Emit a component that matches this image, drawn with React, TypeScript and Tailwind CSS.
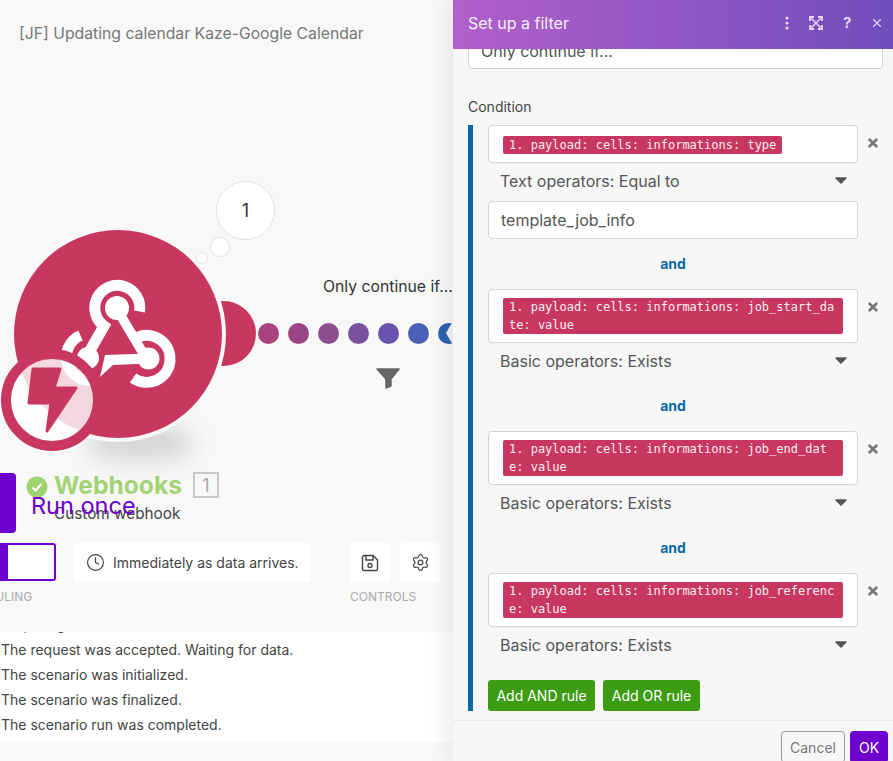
import { Clock, Settings, X } from "lucide-react";

const Token = ({ text }: { text: string }) => (
  <span className="inline-block max-w-full rounded-[2px] bg-[#c8375f] px-[6px] font-['DejaVu_Sans_Mono',monospace] text-[12px] leading-[18px] break-all text-[#fbeef2]">
    {text}
  </span>
);

const Caret = () => (
  <svg width="12" height="7" viewBox="0 0 12 7" className="mr-[11px] -mt-[1px]">
    <path d="M1 1h10L6 6z" fill="#555" stroke="#555" strokeWidth="1.5" strokeLinejoin="round" />
  </svg>
);

const Rule = ({ token, operator, value }: { token: string; operator: string; value?: string }) => (
  <div className="flex flex-col">
    <div className="flex items-start">
      <div className="flex min-h-[38px] w-[370px] shrink-0 items-end rounded-[4px] border border-[#d5d5d5] bg-white px-[14px] py-[8px] leading-[0] shadow-[0_1px_1px_rgba(0,0,0,0.03)]">
        <div>
          <Token text={token} />
        </div>
      </div>
      <svg width="12" height="12" viewBox="0 0 12 12" className="mt-[12px] ml-[10px]" stroke="#777" strokeWidth="3.2">
        <path d="M1 1l10 10M11 1L1 11" />
      </svg>
    </div>
    <div className="mb-[2px] flex h-[36px] w-[370px] items-center justify-between pl-[12px] text-[16px] text-[#555]">
      {operator}
      <Caret />
    </div>
    {value && (
      <div className="flex h-[38px] w-[370px] items-center rounded-[4px] border border-[#d5d5d5] bg-white px-[12px] text-[16px] text-[#555]">
        {value}
      </div>
    )}
  </div>
);

const And = () => (
  <div className="flex h-[50px] w-[370px] items-center justify-center pb-[2px] text-[14px] font-bold text-[#0b69a8]">and</div>
);

const WebhookGlyph = () => (
  <svg className="absolute top-0 left-0" width="230" height="460" viewBox="0 0 230 460" fill="none" stroke="#fff" strokeWidth="11">
    {/* top loop, runs down into the left leg */}
    <path d="M139.5 311.5A22.5 22.5 0 1 0 104 326L88 354" />
    <circle cx="117" cy="308" r="12" fill="#fff" stroke="none" />
    {/* leg to the right dot */}
    <path d="M121 316L143 353" strokeWidth="9.5" />
    {/* right loop */}
    <path d="M138 337A23.5 23.5 0 1 1 133 378" />
    <circle cx="148.5" cy="358.5" r="11" fill="#fff" stroke="none" />
    {/* bottom hook */}
    <path d="M148 353.5V363.5L113 365L100 377L105 355Z" fill="#fff" stroke="none" />
    {/* left loop, passes under the badge */}
    <path d="M80.5 335.5A23.5 23.5 0 0 0 95 380" />
    <circle cx="88" cy="358" r="11" fill="#fff" stroke="none" />
  </svg>
);

const chain = ["#a8437e", "#9c4586", "#8e4f90", "#7a519f", "#6854ad", "#4a5fb8", "#2d62b3"];

const App = () => {
  return (
    <div className="flex h-[761px] w-[893px] overflow-hidden bg-[#f8f8f8] font-['Inter',sans-serif]">
      <div className="flex h-full w-[453px] shrink-0 flex-col">
        <div className="h-[66px] shrink-0 pt-[23px] pl-[19px] text-[15.75px] leading-[22px] whitespace-nowrap text-[#777]">
          [JF] Updating calendar Kaze-Google Calendar
        </div>

        {/* scenario canvas */}
        <div className="relative flex-1 overflow-hidden">
          <div className="absolute top-[-66px] left-0 h-[761px] w-[453px]">
            <div className="absolute top-[428px] left-[90px] h-[30px] w-[100px] rounded-full bg-[#aaa] opacity-50 blur-[12px]" />
            <div className="absolute top-[301px] left-[190px] h-[65px] w-[66px] rounded-full bg-[#c8375f]" />
            <div className="absolute top-[226px] left-[10px] h-[216px] w-[216px] rounded-full bg-[#f8f8f8]" />
            <div className="absolute top-[230px] left-[14px] h-[208px] w-[208px] rounded-full bg-[#c8375f]" />
            <WebhookGlyph />

            {/* trigger badge */}
            <div className="absolute top-[349px] left-[1px] flex h-[102px] w-[102px] items-center justify-center rounded-full border-[10px] border-[#c8375f] bg-white/80">
              <svg width="52" height="68" viewBox="26 366 52 68">
                <path d="M33 369H60L54 388H76L47 431L51 403H29z" fill="#c8375f" stroke="#c8375f" strokeWidth="3" strokeLinejoin="round" />
              </svg>
            </div>

            {/* run count bubbles */}
            <div className="absolute top-[181px] left-[216px] flex h-[59px] w-[59px] items-center justify-center rounded-full border border-[#e2e2e2] bg-white text-[18px] text-[#333]">1</div>
            <div className="absolute top-[237px] left-[210px] h-[20px] w-[20px] rounded-full border border-[#e2e2e2] bg-white" />
            <div className="absolute top-[252px] left-[196px] h-[12px] w-[12px] rounded-full border border-[#e2e2e2] bg-white" />

            {/* connection */}
            {chain.map((color, i) => (
              <div key={color} className="absolute top-[323px] h-[21px] w-[21px] rounded-full" style={{ left: 258 + i * 30, background: color }} />
            ))}
            <svg className="absolute top-[320px] left-[443px]" width="10" height="26" viewBox="0 0 10 26">
              <path d="M10 1L3 13L10 25z" fill="#f4f4f4" />
            </svg>
            <div className="absolute top-[276px] left-[323px] text-[15.75px] leading-[22px] whitespace-nowrap text-[#333]">Only continue if...</div>
            <svg className="absolute top-[367px] left-[376px]" width="24" height="22" viewBox="0 0 24 22">
              <path d="M1 2h22l-8 10v7l-5 2v-9z" fill="#666" stroke="#666" strokeWidth="1.5" strokeLinejoin="round" />
            </svg>

            {/* module label */}
            <div className="absolute top-[473px] left-0 h-[60px] w-[16px] rounded-r-[4px] bg-[#6d00cc]" />
            <svg className="absolute top-[476px] left-[26px]" width="22" height="22" viewBox="0 0 22 22">
              <circle cx="11" cy="11" r="10.5" fill="#a0d26f" />
              <path d="M6.5 11.5l3 3 6-6.5" fill="none" stroke="#fff" strokeWidth="2" />
            </svg>
            <div className="absolute top-[468px] left-[54px] text-[24.6px] leading-[34px] font-bold whitespace-nowrap text-[#a3d373]">Webhooks</div>
            <div className="absolute top-[472px] left-[193px] flex h-[26px] w-[26px] items-center justify-center border-2 border-[#c8c8c8] text-[18px] text-[#aaa]">1</div>
            <div className="absolute top-[504px] left-[54px] text-[15.3px] leading-[20px] whitespace-nowrap text-[#444]">Custom webhook</div>
            <div className="absolute top-[490px] left-[31px] text-[23.5px] leading-[32px] whitespace-nowrap text-[#6d00cc]">Run once</div>
          </div>
        </div>

        {/* toolbar */}
        <div className="flex h-[89px] shrink-0 items-start">
          <div className="flex w-[56px] flex-col items-start">
            <div className="h-[38px] w-[56px] rounded-r-[3px] border-2 border-l-0 border-[#6d00cc] bg-white">
              <div className="h-full w-[8px] bg-[#6d00cc]" />
            </div>
            <div className="mt-[8px] w-full overflow-hidden text-[12px] leading-[16px] text-[#aaa]">
              <span className="-ml-[46px] block whitespace-nowrap">SCHEDULING</span>
            </div>
          </div>
          <div className="ml-[18px] flex h-[39px] w-[237px] items-center gap-[8px] rounded-[4px] bg-white pb-[1px] pl-[12px] text-[14px] whitespace-nowrap text-[#444]">
            <Clock size={19} strokeWidth={1.5} />
            Immediately as data arrives.
          </div>
          <div className="ml-[39px] flex flex-col">
            <div className="flex gap-[10px]">
              <div className="flex h-[39px] w-[40px] items-center justify-center rounded-[4px] bg-white text-[#444]">
                <svg width="18" height="18" viewBox="0 0 18 18" fill="none" stroke="currentColor" strokeWidth="1.4">
                  <path d="M3.5 1.5h8.5L16.5 6v9a1.5 1.5 0 0 1-1.5 1.5H3A1.5 1.5 0 0 1 1.5 15V3.5a2 2 0 0 1 2-2z" />
                  <path d="M5 1.5V6h7V1.5" />
                  <circle cx="9" cy="11.5" r="2" />
                </svg>
              </div>
              <div className="flex h-[39px] w-[40px] items-center justify-center rounded-[4px] bg-white text-[#444]">
                <Settings size={19} strokeWidth={1.5} />
              </div>
            </div>
            <div className="mt-[7px] text-[12px] leading-[16px] text-[#aaa]">CONTROLS</div>
          </div>
        </div>

        {/* log */}
        <div className="h-[110px] shrink-0 overflow-hidden bg-white pl-[1px] text-[14px] leading-[25px] text-[#444]">
          <div className="-mt-[20px]">Preparing</div>
          <div>The request was accepted. Waiting for data.</div>
          <div>The scenario was initialized.</div>
          <div>The scenario was finalized.</div>
          <div>The scenario run was completed.</div>
        </div>
        <div className="h-[19px] shrink-0" />
      </div>

      {/* filter panel */}
      <div className="z-10 flex h-full w-[440px] shrink-0 flex-col bg-[#f7f7f8] shadow-[-4px_0_22px_rgba(0,0,0,0.09)]">
        <div className="z-10 flex h-[49px] shrink-0 items-center bg-gradient-to-r from-[#b25fcb] to-[#6f4dbb] pb-[3px] pl-[15px] text-[16px] text-[#f6eefb]">
          <span>Set up a filter</span>
          <div className="ml-auto flex h-full items-center text-[#e6d6f3]">
            <svg width="4" height="14" viewBox="0 0 4 14" className="mr-[20px]" fill="currentColor">
              <circle cx="2" cy="2" r="1.6" />
              <circle cx="2" cy="7" r="1.6" />
              <circle cx="2" cy="12" r="1.6" />
            </svg>
            <svg width="14" height="14" viewBox="0 0 14 14" className="mr-[20px]" fill="none" stroke="currentColor" strokeWidth="1.8">
              <path d="M2 2l10 10M12 2L2 12" strokeWidth="1.5" />
              <path d="M1 5V1h4M9 1h4v4M13 9v4H9M5 13H1V9" />
            </svg>
            <span className="mr-[17px] w-[10px] text-[15px] font-bold">?</span>
            <X size={14} strokeWidth={2} className="mr-[9px]" />
          </div>
        </div>

        <div className="flex-1 overflow-hidden px-[15px]">
          <div className="-mt-[16px] flex h-[36px] w-[415px] items-center rounded-[4px] border border-[#d5d5d5] bg-white px-[12px] text-[16px] text-[#555]">
            Only continue if...
          </div>
          <div className="mt-[28px] text-[14px] leading-[20px] text-[#444]">Condition</div>
          <div className="mt-[8px] border-l-[5px] border-[#0a66a6] pl-[15px]">
            <Rule token="1. payload: cells: informations: type" operator="Text operators: Equal to" value="template_job_info" />
            <And />
            <Rule token="1. payload: cells: informations: job_start_date: value" operator="Basic operators: Exists" />
            <And />
            <Rule token="1. payload: cells: informations: job_end_date: value" operator="Basic operators: Exists" />
            <And />
            <Rule token="1. payload: cells: informations: job_reference: value" operator="Basic operators: Exists" />
            <div className="mt-[15px] flex gap-[8px]">
              <button className="h-[31px] w-[107px] rounded-[3px] bg-[#3d9c12] text-[14px] text-white">Add AND rule</button>
              <button className="h-[31px] w-[97px] rounded-[3px] bg-[#3d9c12] text-[14px] text-white">Add OR rule</button>
            </div>
          </div>
        </div>

        <div className="flex h-[41px] shrink-0 items-start justify-end gap-[5px] border-t border-[#eaeaea] pt-[10px] pr-[5px]">
          <button className="h-[32px] w-[64px] rounded-[4px] border border-[#999] bg-transparent text-[14px] text-[#777]">Cancel</button>
          <button className="h-[32px] w-[38px] rounded-[4px] bg-[#6d00cc] text-[14px] text-white">OK</button>
        </div>
      </div>
    </div>
  );
};

export default App;
